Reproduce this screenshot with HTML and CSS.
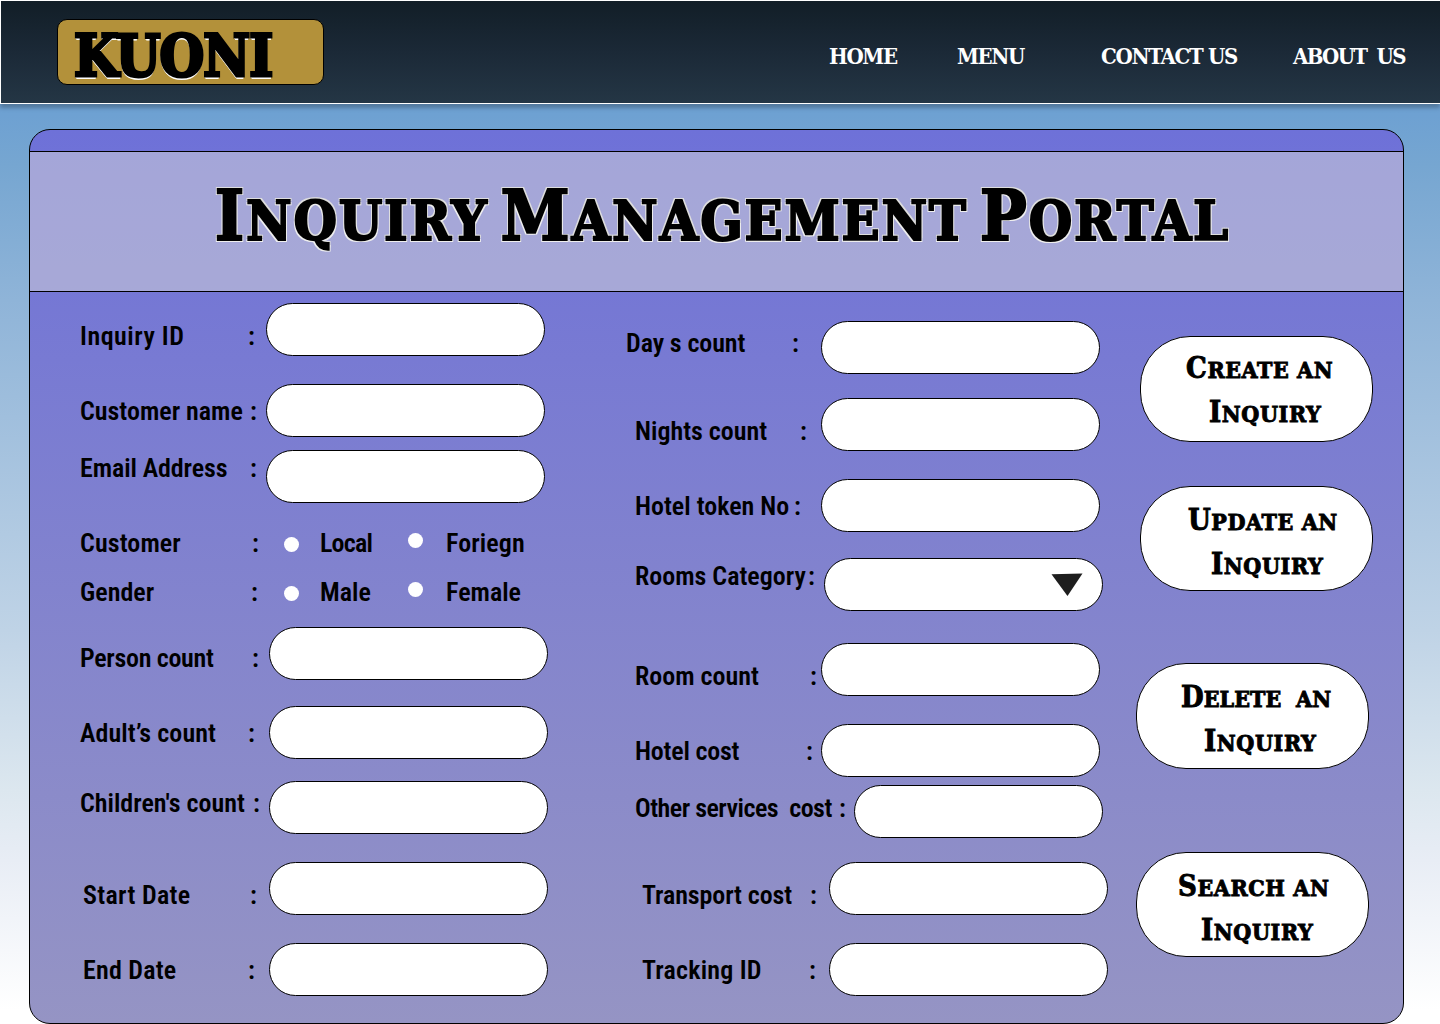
FILE: index.html
```html
<!DOCTYPE html>
<html lang="en">
<head>
<meta charset="utf-8">
<title>Inquiry Management Portal</title>
<link rel="stylesheet" href="styles.css">
</head>
<body>
<header class="topbar">
  <div class="logo"><span>KUONI</span></div>
  <nav class="nav">
    <a class="home">HOME</a><a class="menu">MENU</a><a class="contact">CONTACT US</a><a class="about">ABOUT&nbsp; US</a>
  </nav>
</header>

<main class="panel">
  <div class="banner">
    <h1><span><b>I</b>nquiry</span><span><b>M</b>anagement</span><span><b>P</b>ortal</span></h1>
  </div>

  <form class="form">
    <div class="column left">
      <div class="row inquiry-id"><label>Inquiry ID</label><i>:</i><span class="field"></span></div>
      <div class="row customer-name"><label>Customer name</label><i>:</i><span class="field"></span></div>
      <div class="row email"><label>Email Address</label><i>:</i><span class="field"></span></div>
      <div class="choice customer"><label>Customer</label><i>:</i><span class="dot"></span><span class="option local">Local</span><span class="dot second"></span><span class="option">Foriegn</span></div>
      <div class="choice gender"><label>Gender</label><i>:</i><span class="dot"></span><span class="option">Male</span><span class="dot second"></span><span class="option">Female</span></div>
      <div class="row inset person"><label>Person count</label><i>:</i><span class="field"></span></div>
      <div class="row inset adult"><label>Adult’s count</label><i>:</i><span class="field"></span></div>
      <div class="row inset children"><label>Children's count</label><i>:</i><span class="field"></span></div>
      <div class="row inset start-date"><label>Start Date</label><i>:</i><span class="field"></span></div>
      <div class="row inset end-date"><label>End Date</label><i>:</i><span class="field"></span></div>
    </div>

    <div class="column middle">
      <div class="row days"><label>Day s count</label><i>:</i><span class="field"></span></div>
      <div class="row nights"><label>Nights count</label><i>:</i><span class="field"></span></div>
      <div class="row token"><label>Hotel token No</label><i>:</i><span class="field"></span></div>
      <div class="row category"><label>Rooms Category</label><i>:</i><span class="field select"><svg width="32" height="24" viewBox="0 0 32 24"><path d="M0.5 1.3L31.5 0.5L16.5 23Z" fill="#1e1e1e"/></svg></span></div>
      <div class="row rooms"><label>Room count</label><i>:</i><span class="field"></span></div>
      <div class="row hotel-cost"><label>Hotel cost</label><i>:</i><span class="field"></span></div>
      <div class="row other"><label>Other services&nbsp; cost</label><i>:</i><span class="field"></span></div>
      <div class="row transport"><label>Transport cost</label><i>:</i><span class="field"></span></div>
      <div class="row tracking"><label>Tracking ID</label><i>:</i><span class="field"></span></div>
    </div>

    <div class="column actions">
      <button type="button" class="create"><span><b>C</b>reate an</span><span><b>I</b>nquiry</span></button>
      <button type="button" class="update"><span><b>U</b>pdate an</span><span><b>I</b>nquiry</span></button>
      <button type="button" class="delete"><span><b>D</b>elete&nbsp; an</span><span><b>I</b>nquiry</span></button>
      <button type="button" class="search"><span><b>S</b>earch an</span><span><b>I</b>nquiry</span></button>
    </div>
  </form>
</main>
</body>
</html>
```
FILE: styles.css
```css
* { box-sizing: border-box; }

body {
  margin: 0;
  height: 1024px;
  overflow: hidden;
  color: #000;
  background: linear-gradient(180deg, #649bd0 0, #6ea1d2 115px, #76a6d1 165px, #8fb4d8 300px, #bfd3e6 630px, #dce7ef 790px, #e8edf5 860px, #fff 1010px);
  font-family: Roboto, "Open Sans", sans-serif;
}

.topbar {
  display: flex;
  height: 104px;
  padding-left: 56px;
  border: solid #fff;
  border-width: 1px 0 1px 1px;
  background: linear-gradient(#121e27, #1b2937 50%, #243645);
  box-shadow: 0 4px 4px rgba(0, 0, 0, .25);
}

.logo {
  width: 267px;
  height: 66px;
  margin-top: 18px;
  padding-left: 16px;
  border: 1px solid #000;
  border-radius: 10px;
  background: #b3913a;
  font: 700 57px/72px "DejaVu Serif Condensed", "DejaVu Serif", serif;
  letter-spacing: -.9px;
  text-shadow: 0 2px 0 #fff, -1px 2px 0 #fff, 0 3px 0 #fff;
  -webkit-text-stroke: 3px #000;
}

.nav {
  display: flex;
  color: #fff;
  font: 700 22px/30px "DejaVu Serif Condensed", "DejaVu Serif", serif;
  white-space: nowrap;
}
.nav a { margin-top: 40px; }
.home { margin-left: 505px; width: 128px; letter-spacing: -1.3px; }
.menu { width: 144px; letter-spacing: -1.4px; }
.contact { width: 192px; letter-spacing: -1.3px; }
.about { letter-spacing: -1.7px; }

.panel {
  width: 1375px;
  height: 895px;
  margin: 25px 0 0 29px;
  border: 1px solid #000;
  border-radius: 21px;
  background: linear-gradient(#6e71d8, #9594c4);
}

.banner {
  height: 141px;
  margin-top: 21px;
  border: solid #000;
  border-width: 1px 0;
  background: rgba(217, 217, 217, .5);
}

h1 {
  display: flex;
  gap: 12px;
  margin: 0;
  padding-left: 185px;
  font: 700 55px/138px "DejaVu Serif Condensed", "DejaVu Serif", serif;
  letter-spacing: 2.2px;
  text-transform: uppercase;
  -webkit-text-stroke: 2.2px #000;
  text-shadow: 2px 2px 0 #eee, -2px -2px 0 #ddd, 2px -2px 0 #ddd, -2px 2px 0 #eee, 0 2px 0 #eee, 0 -2px 0 #ddd;
}
h1 b { font-size: 69px; line-height: 1; }

.form { display: flex; }
.column { display: flex; flex-direction: column; }
.left { width: 546px; padding-left: 50px; }
.middle { width: 560px; padding-left: 50px; }

.row, .choice {
  display: flex;
  flex: none;
  font: 600 26px/32px Roboto, "Open Sans", sans-serif;
  font-stretch: 75%;
  white-space: nowrap;
}
.row { height: 53px; }
.choice { height: 32px; }
.row label, .row i { padding-top: var(--drop); }
i { font-style: normal; }
.row i, .choice i { width: 0; margin-left: var(--colon); }
.row label, .choice label { width: 0; }
.field {
  width: 279px;
  height: 53px;
  margin-left: calc(186px - var(--colon));
  border: 1px solid #000;
  border-radius: 27px;
  background: #fff;
}

.inset .field { margin-left: calc(189px - var(--colon)); }
.inquiry-id { --drop: 17px; --colon: 168px; margin-top: 11px; letter-spacing: .5px; }
.customer-name { --drop: 11px; --colon: 170px; margin-top: 28px; }
.email { --drop: 2px; --colon: 170px; margin-top: 13px; letter-spacing: -.1px; }
.customer { --colon: 172px; margin-top: 24px; letter-spacing: .1px; }
.gender { --colon: 171px; margin-top: 17px; }
.person { --drop: 15px; --colon: 172px; margin-top: 19px; letter-spacing: -.3px; }
.adult { --drop: 11px; --colon: 168px; margin-top: 26px; letter-spacing: .1px; }
.children { --drop: 6px; --colon: 173px; margin-top: 22px; }
.start-date { --drop: 17px; --colon: 167px; margin-top: 28px; padding-left: 3px; letter-spacing: .3px; }
.end-date { --drop: 11px; --colon: 165px; margin-top: 28px; padding-left: 3px; letter-spacing: .2px; }
.inset.start-date .field, .inset.end-date .field { margin-left: calc(186px - var(--colon)); }

.dot {
  width: 15px;
  height: 15px;
  margin: 10px 0 0 calc(204px - var(--colon));
  border-radius: 50%;
  background: #fff;
}
.dot.second { margin: 6px 0 0 33px; }
.option { width: 55px; margin-left: 21px; }
.option.local { letter-spacing: -.8px; }
.second + .option { margin-left: 23px; }

.middle .row { margin-left: 9px; }
.middle .days { --drop: 6px; --colon: 166px; margin: 29px 0 0; letter-spacing: -.1px; }
.middle .days .field { margin-left: 29px; }
.nights { --drop: 17px; --colon: 165px; margin-top: 24px; }
.token { --drop: 11px; --colon: 159px; margin-top: 28px; }
.category { --drop: 2px; --colon: 173px; margin-top: 26px; }
.rooms { --drop: 17px; --colon: 175px; margin-top: 32px; }
.hotel-cost { --drop: 11px; --colon: 171px; margin-top: 28px; letter-spacing: -.2px; }
.other { --drop: 7px; --colon: 204px; margin-top: 8px; letter-spacing: -.5px; }
.transport { --drop: 17px; --colon: 168px; margin-top: 24px; letter-spacing: -.1px; }
.tracking { --drop: 11px; --colon: 167px; margin-top: 28px; letter-spacing: .2px; }
.middle .category .field { margin-left: 16px; }
.middle .other .field { width: 249px; margin-left: 15px; }
.middle .transport, .middle .tracking { padding-left: 7px; }
.middle .transport .field, .middle .tracking .field { margin-left: calc(187px - var(--colon)); }
.select { padding: 14px 0 0 226px; }
.select svg { display: block; }

.actions { align-items: flex-start; }
button {
  display: flex;
  flex-direction: column;
  flex: none;
  width: 233px;
  height: 106px;
  padding: 11px 0 0 45px;
  border: 1px solid #000;
  border-radius: 50px;
  background: #fff;
  color: #000;
  font: 700 23px/44px "DejaVu Serif Condensed", "DejaVu Serif", serif;
  letter-spacing: .6px;
  text-align: left;
  text-transform: uppercase;
  white-space: nowrap;
  -webkit-text-stroke: .9px #000;
}
button span { height: 44px; }
button span + span { margin-left: 23px; }
button b { font-size: 29px; line-height: 1; }
.create { margin: 44px 0 0 4px; }
.update { height: 105px; margin: 44px 0 0 4px; padding: 13px 0 0 47px; }
.delete { margin-top: 72px; padding: 13px 0 0 44px; letter-spacing: .1px; }
.delete span + span { letter-spacing: .6px; }
.search { height: 105px; margin-top: 83px; padding: 13px 0 0 41px; }
```
